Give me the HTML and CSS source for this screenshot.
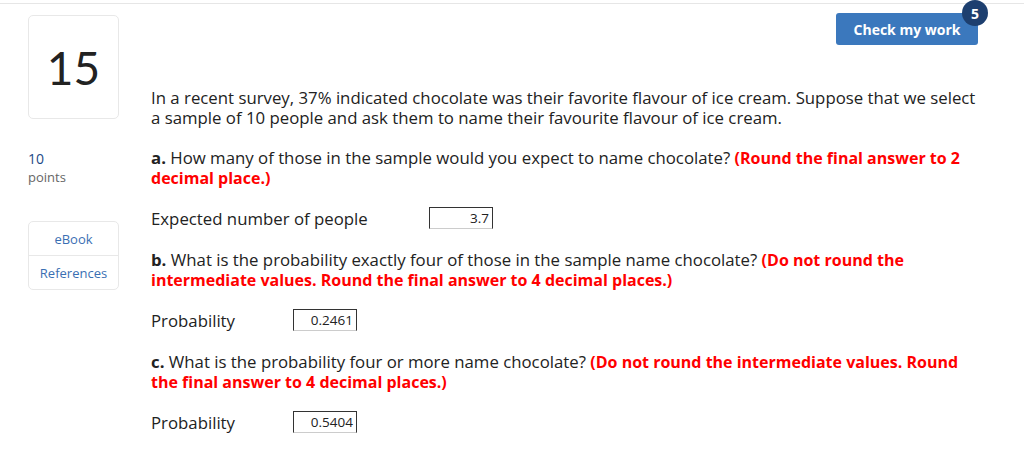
FILE: index.html
```html
<!DOCTYPE html>
<html lang="en">
<head>
<meta charset="utf-8">
<title>Question 15</title>
<link rel="stylesheet" href="styles.css">
</head>
<body>
<div class="topline"></div>
<div class="page">
  <aside class="side">
    <div class="qnum">15</div>
    <div class="points">
      <div class="pts-val">10</div>
      <div class="pts-label">points</div>
    </div>
    <div class="links">
      <a class="link">eBook</a>
      <a class="link">References</a>
    </div>
  </aside>
  <main class="main">
    <div class="toolbar">
      <button class="check">Check my work<span class="badge">5</span></button>
    </div>
    <p class="para">In a recent survey, 37% indicated chocolate was their favorite flavour of ice cream. Suppose that we select<br>a sample of 10 people and ask them to name their favourite flavour of ice cream.</p>
    <p class="para"><b>a.</b> How many of those in the sample would you expect to name chocolate? <span class="note">(Round the final answer to 2<br>decimal place.)</span></p>
    <div class="row"><span class="label label-wide">Expected number of people</span><span class="answer">3.7</span></div>
    <p class="para"><b>b.</b> What is the probability exactly four of those in the sample name chocolate? <span class="note">(Do not round the<br>intermediate values. Round the final answer to 4 decimal places.)</span></p>
    <div class="row"><span class="label">Probability</span><span class="answer">0.2461</span></div>
    <p class="para"><b>c.</b> What is the probability four or more name chocolate? <span class="note">(Do not round the intermediate values. Round<br>the final answer to 4 decimal places.)</span></p>
    <div class="row"><span class="label">Probability</span><span class="answer">0.5404</span></div>
  </main>
</div>
</body>
</html>
```
FILE: styles.css
```css
html, body {
  margin: 0;
  padding: 0;
  background: #fff;
}
body {
  font-family: "Open Sans", Lato, sans-serif;
  color: #222;
}
.topline {
  margin-top: 3px;
  border-top: 1px solid #e6e6e6;
}
.page {
  display: flex;
  padding-left: 28px;
}
.side {
  width: 91px;
  flex: none;
  padding-top: 11px;
}
.qnum {
  height: 102px;
  border: 1px solid #e8e8e8;
  border-radius: 5px;
  display: flex;
  align-items: center;
  justify-content: center;
  font-family: Lato, sans-serif;
  font-size: 46px;
  color: #222;
}
.points {
  margin-top: 31px;
}
.pts-val {
  font-size: 14px;
  color: #1d4a86;
  line-height: 18px;
}
.pts-label {
  font-size: 13px;
  color: #666;
  line-height: 18px;
}
.links {
  margin-top: 35px;
  border: 1px solid #e8e8e8;
  border-radius: 5px;
  display: flex;
  flex-direction: column;
}
.link {
  height: 33px;
  display: flex;
  align-items: center;
  justify-content: center;
  font-size: 13px;
  color: #3a6fb3;
}
.link + .link {
  border-top: 1px solid #e8e8e8;
}
.main {
  margin-left: 32px;
  width: 850px;
}
.toolbar {
  display: flex;
  justify-content: flex-end;
  width: 827px;
  padding-top: 9px;
  height: 45px;
  box-sizing: border-box;
  margin-bottom: 39px;
}
.check {
  position: relative;
  width: 142px;
  height: 32px;
  border: none;
  border-radius: 3px;
  background: #3b78bd;
  color: #fff;
  font-family: inherit;
  font-weight: bold;
  font-size: 14px;
  padding: 0;
}
.badge {
  position: absolute;
  right: -10px;
  top: -13px;
  width: 26px;
  height: 26px;
  border-radius: 50%;
  background: #1d3f6f;
  color: #fff;
  font-size: 14px;
  font-weight: bold;
  display: flex;
  align-items: center;
  justify-content: center;
}
.para {
  margin: 0 0 20px;
  font-size: 16.8px;
  line-height: 20px;
  white-space: nowrap;
}
.para b {
  font-weight: bold;
}
.note {
  color: #f00;
  font-weight: bold;
  font-size: 16px;
}
.row {
  display: flex;
  align-items: center;
  height: 22px;
  margin: -1px 0 21px;
  font-size: 16.8px;
}
.label {
  width: 142px;
}
.label-wide {
  width: 278px;
}
.answer {
  box-sizing: border-box;
  width: 64px;
  height: 22px;
  border: 1px solid #333;
  border-bottom-color: #ccc;
  text-align: right;
  font-size: 13.5px;
  line-height: 20px;
  padding-right: 3px;
}
```
